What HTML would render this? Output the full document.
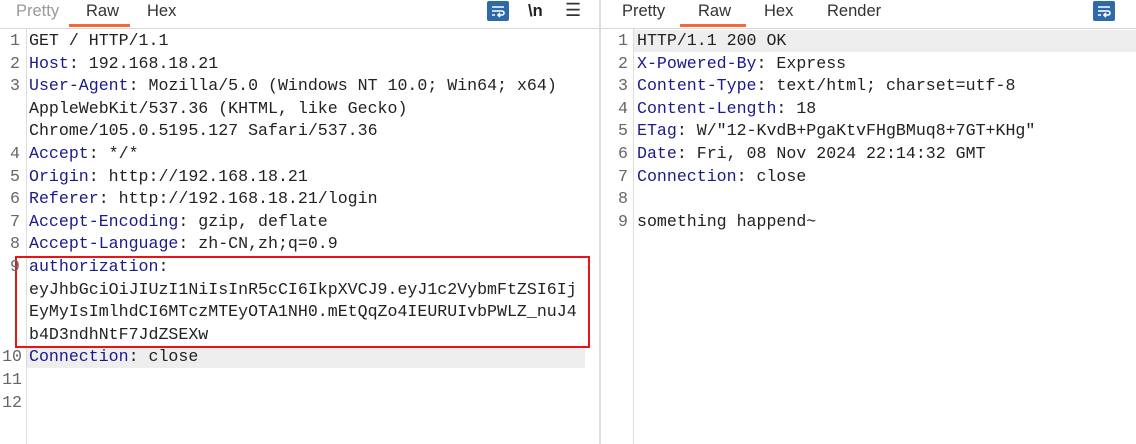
<!DOCTYPE html>
<html><head><meta charset="utf-8"><style>
body{margin:0;width:1136px;height:444px;background:#fff;overflow:hidden;position:relative;font-family:"Liberation Sans",sans-serif}
.tabs{position:absolute;top:0;height:28px;border-bottom:1px solid #d8d8d8;font-size:16.5px;color:#333}
.tab{position:absolute;top:2px}
.ul{position:absolute;top:24px;height:3px;background:#f06a3a}
.code{position:absolute;top:30px;font-family:"Liberation Mono",monospace;font-size:16.6px;line-height:22.6px;color:#222}
.row{position:relative;height:22.6px;white-space:pre}
.n{position:absolute;text-align:right;color:#666}
.k{color:#1a1a8c}
.gut{position:absolute;top:29px;bottom:0;width:1px;background:#ddd}
.icon{position:absolute;top:1px;width:22px;height:20px;background:#2f6aa8;border-radius:2px}
</style></head><body>
<div class="tabs" style="left:0;width:599px">
<span class="tab" style="left:16px;color:#999">Pretty</span>
<span class="tab" style="left:86px">Raw</span>
<span class="tab" style="left:147px">Hex</span>
<div class="ul" style="left:69px;width:61px"></div>
<div class="icon" style="left:487px"><svg width="22" height="20"><path d="M5 6h12M5 10h10a2 2 0 0 1 0 4h-4M13 12l-2 2 2 2M5 14h3" stroke="#fff" stroke-width="1.6" fill="none"/></svg></div>
<span class="tab" style="left:528px;font-weight:bold;color:#222">\n</span>
<span class="tab" style="left:565px;font-size:18px;top:0">☰</span>
</div>
<div style="position:absolute;left:599px;top:0;bottom:0;width:2px;background:#ddd"></div>
<div class="tabs" style="left:601px;width:535px">
<span class="tab" style="left:21px">Pretty</span>
<span class="tab" style="left:97px">Raw</span>
<span class="tab" style="left:163px">Hex</span>
<span class="tab" style="left:226px">Render</span>
<div class="ul" style="left:79px;width:66px"></div>
<div class="icon" style="left:492px"><svg width="22" height="20"><path d="M5 6h12M5 10h10a2 2 0 0 1 0 4h-4M13 12l-2 2 2 2M5 14h3" stroke="#fff" stroke-width="1.6" fill="none"/></svg></div>
</div>
<div class="gut" style="left:26px"></div>
<div class="gut" style="left:633px"></div>
<div style="position:absolute;left:27px;top:346px;width:558px;height:22px;background:#eee"></div>
<div style="position:absolute;left:634px;top:30px;width:502px;height:22px;background:#eee"></div>
<div style="position:absolute;left:15px;top:256px;width:571px;height:88px;border:2px solid #e8141a"></div>
<div class="code" style="left:0;width:600px">
<div class="row"><span class="n" style="left:0;width:20px">1</span><span style="position:absolute;left:29px">GET / HTTP/1.1</span></div>
<div class="row"><span class="n" style="left:0;width:20px">2</span><span style="position:absolute;left:29px"><span class="k">Host</span>: 192.168.18.21</span></div>
<div class="row"><span class="n" style="left:0;width:20px">3</span><span style="position:absolute;left:29px"><span class="k">User-Agent</span>: Mozilla/5.0 (Windows NT 10.0; Win64; x64)</span></div>
<div class="row"><span style="position:absolute;left:29px">AppleWebKit/537.36 (KHTML, like Gecko)</span></div>
<div class="row"><span style="position:absolute;left:29px">Chrome/105.0.5195.127 Safari/537.36</span></div>
<div class="row"><span class="n" style="left:0;width:20px">4</span><span style="position:absolute;left:29px"><span class="k">Accept</span>: */*</span></div>
<div class="row"><span class="n" style="left:0;width:20px">5</span><span style="position:absolute;left:29px"><span class="k">Origin</span>: http://192.168.18.21</span></div>
<div class="row"><span class="n" style="left:0;width:20px">6</span><span style="position:absolute;left:29px"><span class="k">Referer</span>: http://192.168.18.21/login</span></div>
<div class="row"><span class="n" style="left:0;width:20px">7</span><span style="position:absolute;left:29px"><span class="k">Accept-Encoding</span>: gzip, deflate</span></div>
<div class="row"><span class="n" style="left:0;width:20px">8</span><span style="position:absolute;left:29px"><span class="k">Accept-Language</span>: zh-CN,zh;q=0.9</span></div>
<div class="row"><span class="n" style="left:0;width:20px">9</span><span style="position:absolute;left:29px"><span class="k">authorization</span>:</span></div>
<div class="row"><span style="position:absolute;left:29px">eyJhbGciOiJIUzI1NiIsInR5cCI6IkpXVCJ9.eyJ1c2VybmFtZSI6Ij</span></div>
<div class="row"><span style="position:absolute;left:29px">EyMyIsImlhdCI6MTczMTEyOTA1NH0.mEtQqZo4IEURUIvbPWLZ_nuJ4</span></div>
<div class="row"><span style="position:absolute;left:29px">b4D3ndhNtF7JdZSEXw</span></div>
<div class="row"><span class="n" style="left:0;width:22px">10</span><span style="position:absolute;left:29px"><span class="k">Connection</span>: close</span></div>
<div class="row"><span class="n" style="left:0;width:22px">11</span></div>
<div class="row"><span class="n" style="left:0;width:22px">12</span></div>
</div>
<div class="code" style="left:601px;width:535px">
<div class="row"><span class="n" style="left:0;width:27px">1</span><span style="position:absolute;left:36px">HTTP/1.1 200 OK</span></div>
<div class="row"><span class="n" style="left:0;width:27px">2</span><span style="position:absolute;left:36px"><span class="k">X-Powered-By</span>: Express</span></div>
<div class="row"><span class="n" style="left:0;width:27px">3</span><span style="position:absolute;left:36px"><span class="k">Content-Type</span>: text/html; charset=utf-8</span></div>
<div class="row"><span class="n" style="left:0;width:27px">4</span><span style="position:absolute;left:36px"><span class="k">Content-Length</span>: 18</span></div>
<div class="row"><span class="n" style="left:0;width:27px">5</span><span style="position:absolute;left:36px"><span class="k">ETag</span>: W/"12-KvdB+PgaKtvFHgBMuq8+7GT+KHg"</span></div>
<div class="row"><span class="n" style="left:0;width:27px">6</span><span style="position:absolute;left:36px"><span class="k">Date</span>: Fri, 08 Nov 2024 22:14:32 GMT</span></div>
<div class="row"><span class="n" style="left:0;width:27px">7</span><span style="position:absolute;left:36px"><span class="k">Connection</span>: close</span></div>
<div class="row"><span class="n" style="left:0;width:27px">8</span></div>
<div class="row"><span class="n" style="left:0;width:27px">9</span><span style="position:absolute;left:36px">something happend~</span></div>
</div>
</body></html>
